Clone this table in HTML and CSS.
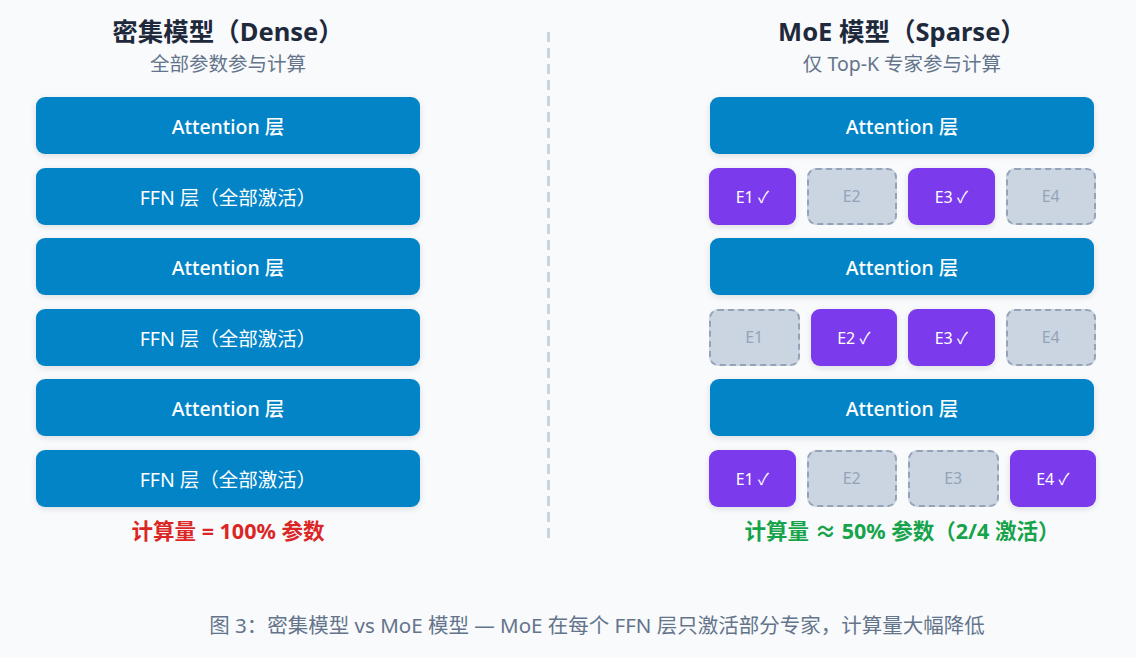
FILE: index.html
```html
<!DOCTYPE html>
<html lang="zh">
<head>
<meta charset="utf-8">
<link rel="stylesheet" href="styles.css">
</head>
<body>
<div class="page">
  <div class="compare">
    <section class="col">
      <h2 class="title">密集模型（Dense）</h2>
      <p class="sub">全部参数参与计算</p>
      <div class="stack">
        <div class="layer attn">Attention 层</div>
        <div class="layer">FFN 层（全部激活）</div>
        <div class="layer attn">Attention 层</div>
        <div class="layer">FFN 层（全部激活）</div>
        <div class="layer attn">Attention 层</div>
        <div class="layer">FFN 层（全部激活）</div>
      </div>
      <p class="result red">计算量 = 100% 参数</p>
    </section>
    <div class="divider"></div>
    <section class="col">
      <h2 class="title">MoE 模型（Sparse）</h2>
      <p class="sub">仅 Top-K 专家参与计算</p>
      <div class="stack">
        <div class="layer attn">Attention 层</div>
        <div class="experts">
          <div class="ex on">E1 ✓</div>
          <div class="ex off">E2</div>
          <div class="ex on">E3 ✓</div>
          <div class="ex off">E4</div>
        </div>
        <div class="layer attn">Attention 层</div>
        <div class="experts">
          <div class="ex off">E1</div>
          <div class="ex on">E2 ✓</div>
          <div class="ex on">E3 ✓</div>
          <div class="ex off">E4</div>
        </div>
        <div class="layer attn">Attention 层</div>
        <div class="experts">
          <div class="ex on">E1 ✓</div>
          <div class="ex off">E2</div>
          <div class="ex off">E3</div>
          <div class="ex on">E4 ✓</div>
        </div>
      </div>
      <p class="result green">计算量 ≈ 50% 参数（2/4 激活）</p>
    </section>
  </div>
  <p class="caption">图 3：密集模型 vs MoE 模型 — MoE 在每个 FFN 层只激活部分专家，计算量大幅降低</p>
</div>
</body>
</html>
```
FILE: styles.css
```css
* { box-sizing: border-box; }
html, body {
  margin: 0;
  padding: 0;
  background: #f8fafc;
}
body {
  font-family: "Noto Sans", "Noto Sans CJK SC", sans-serif;
  width: 1136px;
  height: 658px;
  overflow: hidden;
}
.page {
  display: flex;
  flex-direction: column;
}
.compare {
  display: flex;
  padding-left: 36px;
  padding-top: 15px;
}
.col {
  width: 384px;
  display: flex;
  flex-direction: column;
  align-items: stretch;
}
.divider {
  width: 3px;
  margin-left: 127px;
  margin-right: 160px;
  margin-top: 17px;
  height: 508px;
  background: repeating-linear-gradient(to bottom, #cbd5e1 0 10px, transparent 10px 16px);
}
.title {
  margin: 0;
  font-size: 25.5px;
  line-height: 32px;
  font-weight: 700;
  color: #1e293b;
  text-align: center;
}
.sub {
  margin: 4px 0 0;
  font-size: 19.5px;
  line-height: 26px;
  color: #64748b;
  text-align: center;
}
.stack {
  margin-top: 20px;
  display: flex;
  flex-direction: column;
  gap: 13.6px;
}
.layer {
  height: 57px;
  border-radius: 9px;
  background: #0284c7;
  color: #ffffff;
  font-size: 19.5px;
  display: flex;
  align-items: center;
  justify-content: center;
  box-shadow: 0 2px 6px rgba(15, 23, 42, 0.12);
}
.layer.attn {
  font-weight: 500;
}
.experts {
  display: flex;
  gap: 11px;
  height: 57px;
  margin: 0 -2px 0 -1px;
}
.ex {
  flex: 1 1 0;
  width: 0;
  border-radius: 9px;
  display: flex;
  align-items: center;
  justify-content: center;
  font-size: 16px;
}
.ex.on {
  background: #7c3aed;
  color: #ffffff;
  box-shadow: 0 2px 6px rgba(15, 23, 42, 0.12);
}
.ex.off {
  background: #cbd5e1;
  color: #94a3b8;
  border: 2px dashed #94a3b8;
}
.result {
  margin: 10px 0 0;
  font-size: 21.5px;
  line-height: 28px;
  font-weight: 700;
  text-align: center;
}
.red { color: #dc2626; }
.green { color: #16a34a; }
.caption {
  margin: 66px 0 0;
  text-align: center;
  font-size: 20.5px;
  line-height: 28px;
  color: #64748b;
  padding-left: 58px;
}
```
